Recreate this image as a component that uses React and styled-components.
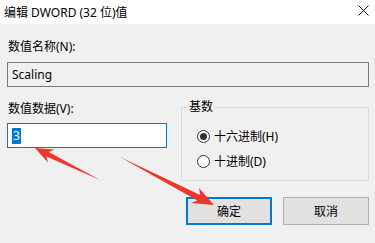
import React from 'react'
import styled, { createGlobalStyle } from 'styled-components'

const GlobalStyle = createGlobalStyle`
  html, body {
    margin: 0;
    padding: 0;
    background: #f0f0f0;
  }
  body {
    font-family: "Noto Sans", "Noto Sans CJK SC", sans-serif;
    font-size: 12px;
    color: #000;
  }
`;

const Dialog = styled.div`
  position: relative;
  width: 375px;
  height: 243px;
  background: #f0f0f0;
  overflow: hidden;
`;

const TitleBar = styled.div`
  height: 24px;
  background: #fff;
  display: flex;
  align-items: center;
  justify-content: space-between;
  padding: 0 6px 0 4px;
  font-size: 12px;
`;

const CloseButton = styled.div`
  width: 11px;
  height: 11px;
  display: flex;
  margin-top: -3px;
`;

const Body = styled.div`
  padding: 15px 6px 0 7px;
`;

const Label = styled.div`
  height: 16px;
  line-height: 16px;
  padding-left: 1px;
`;

const Field = styled.div`
  box-sizing: border-box;
  height: 25px;
  margin-top: ${p => p.$gap || 0}px;
  display: flex;
  align-items: center;
  padding-left: 4px;
  background: ${p => (p.$active ? '#fff' : '#f0f0f0')};
  border: 1px solid ${p => (p.$active ? '#0078d7' : '#7a7a7a')};
`;

const Selected = styled.span`
  background: #0078d7;
  color: #fff;
  line-height: 16px;
  padding: 0 1px;
`;

const Row = styled.div`
  display: flex;
  align-items: flex-start;
  margin-top: 14px;
  gap: 14px;
`;

const LeftColumn = styled.div`
  width: 160px;
  display: flex;
  flex-direction: column;
  gap: 6px;
`;

const Group = styled.fieldset`
  flex: 1;
  margin: -2px 0 0 0;
  height: 82px;
  box-sizing: border-box;
  border: 1px solid #dcdcdc;
  padding: 0 0 0 15px;
  display: flex;
  flex-direction: column;
  gap: 9px;
`;

const Legend = styled.legend`
  padding: 0 2px;
  margin-left: -10px;
  line-height: 16px;
`;

const RadioRow = styled.div`
  display: flex;
  align-items: center;
  gap: 4px;
  height: 16px;
  &:first-of-type {
    margin-top: 13px;
  }
`;

const RadioCircle = styled.span`
  box-sizing: border-box;
  width: 13px;
  height: 13px;
  border-radius: 50%;
  border: 1px solid #333;
  background: #fff;
  display: flex;
  align-items: center;
  justify-content: center;
  &::after {
    content: '';
    width: 7px;
    height: 7px;
    border-radius: 50%;
    background: #333;
    display: ${p => (p.$checked ? 'block' : 'none')};
  }
`;

const ButtonRow = styled.div`
  display: flex;
  justify-content: flex-end;
  gap: 11px;
  margin-top: 16px;
`;

const Button = styled.div`
  box-sizing: border-box;
  width: 86px;
  height: 28px;
  display: flex;
  align-items: center;
  justify-content: center;
  background: #e1e1e1;
  border: ${p => (p.$primary ? '2px solid #0078d7' : '1px solid #adadad')};
`;

const Overlay = styled.svg`
  position: absolute;
  left: 0;
  top: 0;
  pointer-events: none;
`;

function Arrows() {
  return (
    <Overlay width="375" height="243" viewBox="0 0 375 243">
      <polygon
        fill="#f0352b"
        points="35,148 54.5,149.5 48.7,152 100,180 46.5,156.5 48,162.5"
      />
      <polygon
        fill="#f0352b"
        points="214,205 191,203 197.4,200.4 120,157 200.2,195 199,188"
      />
    </Overlay>
  )
}

export default function App() {
  return (
    <Dialog>
      <GlobalStyle />
      <TitleBar>
        <span>编辑 DWORD (32 位)值</span>
        <CloseButton>
          <svg width="11" height="11" viewBox="0 0 11 11">
            <path d="M0.5 0.5 L10.5 10.5 M10.5 0.5 L0.5 10.5" stroke="#111" strokeWidth="1" />
          </svg>
        </CloseButton>
      </TitleBar>
      <Body>
        <Label>数值名称(N):</Label>
        <Field $gap={7}>Scaling</Field>
        <Row>
          <LeftColumn>
            <Label>数值数据(V):</Label>
            <Field $active>
              <Selected>3</Selected>
            </Field>
          </LeftColumn>
          <Group>
            <Legend>基数</Legend>
            <RadioRow>
              <RadioCircle $checked />
              十六进制(H)
            </RadioRow>
            <RadioRow>
              <RadioCircle />
              十进制(D)
            </RadioRow>
          </Group>
        </Row>
        <ButtonRow>
          <Button $primary>确定</Button>
          <Button>取消</Button>
        </ButtonRow>
      </Body>
      <Arrows />
    </Dialog>
  )
}
